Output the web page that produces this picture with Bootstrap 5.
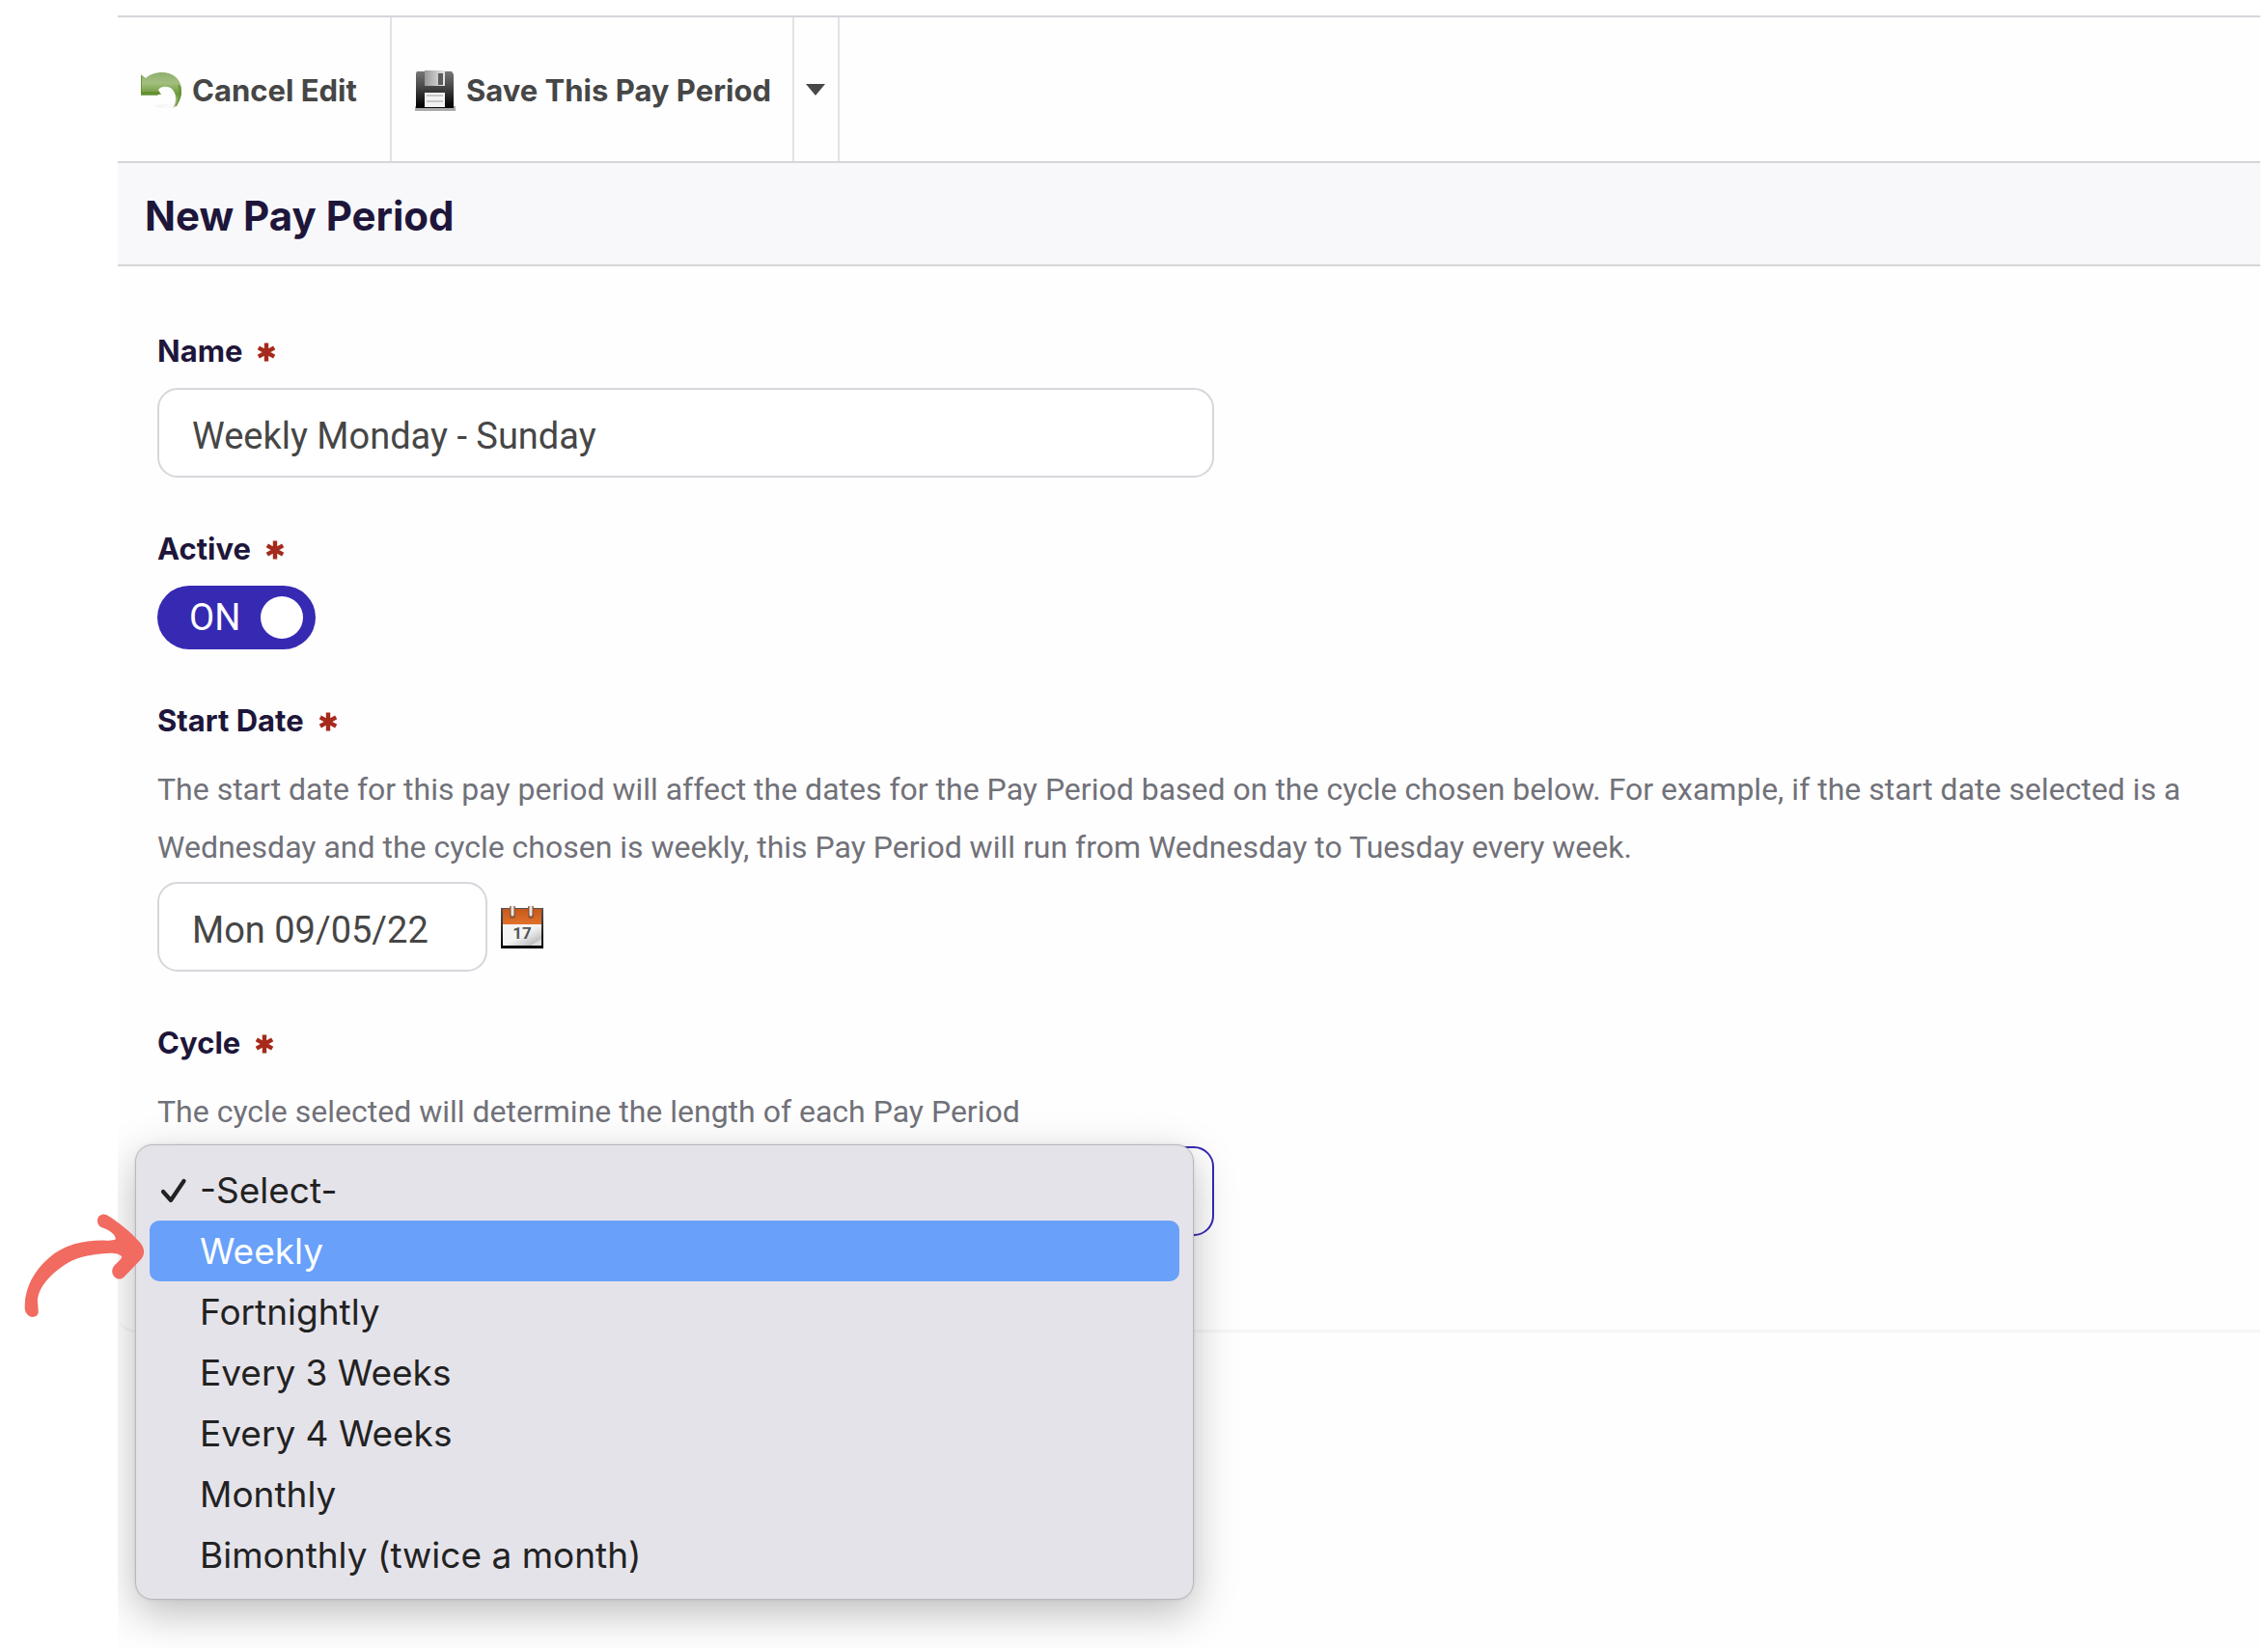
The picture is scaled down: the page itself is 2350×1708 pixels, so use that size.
<!DOCTYPE html>
<html lang="en">
<head>
<meta charset="utf-8">
<meta name="viewport" content="width=device-width, initial-scale=1">
<title>New Pay Period</title>
<link href="https://cdn.jsdelivr.net/npm/bootstrap@5.3.0/dist/css/bootstrap.min.css" rel="stylesheet">
<style>
  body { font-family: Roboto, "Liberation Sans", sans-serif; background: #fff; color: #464646; }
  .page { padding: 16px 8px 0 122px; overflow: hidden; }
  .panel { overflow: hidden; background: #fefefe; }
  .toolbar { height: 151px; border-top: 2px solid #d6d6dc; }
  .tool { gap: 11px; padding: 2px 22px 0 24px; border: 0; border-right: 2px solid #e2e2e4; background: transparent;
          font: 700 31px Inter, sans-serif; color: #464646; }
  .tool-cancel { min-width: 284px; }
  .tool-more { padding: 0 13px 0 12px; }
  .tool svg { display: block; flex: none; }
  .band { height: 109px; padding: 4px 28px 0; background: #f8f8fb; border-top: 2px solid #d6d6da; border-bottom: 2px solid #d6d6da; }
  .band h1 { font: 700 42px/60px Inter, sans-serif; color: #1e163a; }
  .form-area { padding: 65px 41px 97px; border-bottom: 3px solid #f6f6f6; border-bottom-left-radius: 18px; }
  .field { margin-bottom: 51px; }
  .field:last-child { margin-bottom: 0; }
  .field-label { display: flex; align-items: center; gap: 15px; width: fit-content; margin-bottom: 15px;
                 font: 700 31px/46px Inter, sans-serif; color: #1e163a; }
  .field-label:has(+ .help) { margin-bottom: 0; }
  .req { width: 20px; height: 22px; padding-top: 2px; }
  .help { margin: 18px 0 6px; font-size: 32px; line-height: 60px; color: #717179; }
  .box { width: 100%; max-width: 1095px; height: 93px; padding: 6px 34px 0; border: 2px solid #d6d6dc; border-radius: 21px;
         font-size: 38px; line-height: 48px; color: #464646; background-color: #fff; }
  .box-date { width: 342px; }
  .box-cycle { appearance: none; border-color: #3629b2; }
  .cal-btn { margin-left: 14px; padding: 0; border: 0; background: transparent; }
  .cal-btn svg { display: block; }
  .switch { position: relative; display: flex; align-items: center; width: 164px; height: 66px; padding-left: 33px;
            border-radius: 33px; background: #3629b2; font-size: 38px; line-height: 66px; color: #fff; }
  .switch input { position: absolute; inset: 0; width: 100%; height: 100%; margin: 0; opacity: 0; }
  .knob { width: 44px; height: 44px; margin-left: auto; margin-right: 13px; border-radius: 50%; background: #fff; }
  .choices { position: absolute; z-index: 5; top: -2px; left: -23px; width: 1097px; margin: 0; padding: 15px 14px 14px; list-style: none;
          background: #e5e3ea; border: 1px solid #b9b8bd; border-radius: 18px;
          box-shadow: 0 14px 44px rgba(0,0,0,.26), 0 0 3px rgba(0,0,0,.12); }
  .choice { display: flex; align-items: center; width: 100%; height: 63px; padding: 0 8px; border: 0; border-radius: 10px;
            background: transparent; font: 400 37px/63px Inter, sans-serif; color: #222; text-align: left; }
  .choice.picked { background: #68a0fa; color: #fff; }
  .tick { flex: none; width: 44px; height: 34px; }
  /* Sits in the cycle row but is free of the panel's clipping */
  .pointer { position: absolute; z-index: 6; margin: 57px 0 0 -143px; }
</style>
<script src="https://cdn.jsdelivr.net/npm/bootstrap@5.3.0/dist/js/bootstrap.bundle.min.js"></script>
</head>
<body>
<svg width="0" height="0" class="position-absolute" aria-hidden="true">
  <symbol id="star" viewBox="0 0 20 20"><path d="M10 .5V19.500M1.800 5.300L18.200 14.700M18.200 5.300L1.800 14.700" stroke="#a52a1b" stroke-width="4.400" fill="none"/></symbol>
</svg>
<div class="page min-vh-100 d-flex flex-column">
  <main class="panel flex-grow-1">
    <div class="toolbar d-flex">
      <button type="button" class="tool tool-cancel d-flex align-items-center">
        <svg width="42" height="38" viewBox="0 0 42 38">
          <defs><linearGradient id="leaf" x1="0" y1="0" x2="0" y2="1"><stop offset="0" stop-color="#8fae70"/><stop offset=".3" stop-color="#a3bf7e"/><stop offset=".6" stop-color="#6f9a3c"/><stop offset="1" stop-color="#c4d3b2"/></linearGradient></defs>
          <ellipse cx="26" cy="35" rx="12" ry="2" fill="#f6f7f5"/>
          <path d="M0 2L5 6C13-1 27-2 35 4C43 10 44 21 40 29C38 33 36 36 33 37C37 30 37 22 32 17C28 14 21 14 18 18L21 23L0 23Z" fill="url(#leaf)"/>
          <path d="M30 16C38 21 38 30 33 37C28 38 24 37 20 36C30 36 35 26 30 16Z" fill="#fdfdfd" opacity=".5"/>
          <path d="M1 21H18L17 23H0V4" fill="none" stroke="#5f8d2c" stroke-width="1.500"/>
          <path d="M39 13C42 20 41 27 36 35" fill="none" stroke="#5f8d2c" stroke-width="2" opacity=".7"/>
        </svg>
        <span>Cancel Edit</span>
      </button>
      <button type="button" class="tool d-flex align-items-center">
        <svg width="42" height="42" viewBox="0 0 42 42">
          <defs>
            <linearGradient id="shell" x1="0" y1="0" x2="0" y2="1"><stop offset="0" stop-color="#777"/><stop offset=".45" stop-color="#444"/><stop offset=".9" stop-color="#080808"/></linearGradient>
            <linearGradient id="shutter" x1="0" y1="0" x2="1" y2="0"><stop offset="0" stop-color="#999"/><stop offset="1" stop-color="#e8e8e8"/></linearGradient>
          </defs>
          <rect x="0" y="37" width="42" height="5" fill="#aaa"/>
          <path d="M2 1H38L40 4V39H1V3Z" fill="url(#shell)"/>
          <rect x="10" y="0" width="21" height="16" fill="url(#shutter)"/>
          <rect x="24" y="3" width="5" height="12" fill="#5c5c5c"/>
          <rect x="10" y="23" width="21" height="15" fill="#f3f3f3"/>
          <path d="M12 26H29M12 32H29" stroke="#bbb" stroke-width="1.500"/>
        </svg>
        <span>Save This Pay Period</span>
      </button>
      <button type="button" class="tool tool-more d-flex align-items-center" aria-label="More save options">
        <svg width="20" height="12" viewBox="0 0 20 12"><path d="M0 0H20L10 12Z" fill="#484848"/></svg>
      </button>
    </div>
    <header class="band d-flex align-items-center"><h1 class="m-0">New Pay Period</h1></header>

    <form class="form-area">
      <div class="field">
        <label class="field-label" for="name">Name <svg class="req"><use href="#star"/></svg></label>
        <input id="name" type="text" class="box d-block" value="Weekly Monday - Sunday">
      </div>
      <div class="field">
        <label class="field-label" for="active">Active <svg class="req"><use href="#star"/></svg></label>
        <div class="switch"><span>ON</span><span class="knob"></span><input id="active" type="checkbox" role="switch" checked></div>
      </div>
      <div class="field">
        <label class="field-label" for="start">Start Date <svg class="req"><use href="#star"/></svg></label>
        <p class="help">The start date for this pay period will affect the dates for the Pay Period based on the cycle chosen below. For example, if the start date selected is a Wednesday and the cycle chosen is weekly, this Pay Period will run from Wednesday to Tuesday every week.</p>
        <div class="d-flex align-items-center">
          <input id="start" type="text" class="box box-date" value="Mon 09/05/22">
          <button type="button" class="cal-btn" aria-label="Choose a date">
            <svg width="44" height="44" viewBox="0 0 44 44">
              <defs>
                <linearGradient id="head" x1="0" y1="0" x2="0" y2="1"><stop offset="0" stop-color="#c65a1c"/><stop offset="1" stop-color="#e2702a"/></linearGradient>
                <linearGradient id="edge" x1="0" y1="0" x2="0" y2="1"><stop offset="0" stop-color="#555"/><stop offset="1" stop-color="#000"/></linearGradient>
                <linearGradient id="sheet" x1="0" y1="0" x2="1" y2="1"><stop offset=".5" stop-color="#f4f4f4"/><stop offset="1" stop-color="#a8a8a8"/></linearGradient>
              </defs>
              <rect x="0" y="2" width="44" height="42" fill="url(#edge)"/>
              <rect x="2" y="3" width="40" height="16" fill="url(#head)"/>
              <path d="M2 19H42V41H2Z" fill="url(#sheet)"/>
              <path d="M42 34L31 41H42Z" fill="#ddd"/>
              <path d="M12 2V10M31 2V10" stroke="#8a5638" stroke-width="6" stroke-linecap="round"/>
              <path d="M12 1V9M31 1V9" stroke="#ece4dd" stroke-width="3" stroke-linecap="round"/>
              <text x="22" y="34" text-anchor="middle" font-family="Roboto, sans-serif" font-weight="700" font-size="17" fill="#555">17</text>
            </svg>
          </button>
        </div>
      </div>
      <div class="field">
        <label class="field-label" for="cycle">Cycle <svg class="req"><use href="#star"/></svg></label>
        <p class="help">The cycle selected will determine the length of each Pay Period</p>
        <svg class="pointer" width="160" height="130" viewBox="0 0 480 390" aria-hidden="true">
          <path fill="#f16b60" d="M17 330C16 270 46 215 92 176C140 134 205 120 270 122C282 123 292 122 300 118C297 101 281 90 257 82C246 77 242 68 243 58C245 44 259 37 272 43C309 65 345 95 374 127C391 145 391 166 378 181L327 234C317 244 306 244 297 236C288 228 286 215 292 205C299 193 315 186 319 172C309 160 283 159 262 163C218 166 172 174 131 205C96 230 62 265 57 303C56 315 60 335 59 345C57 360 39 364 28 355C20 348 17 340 17 330Z"/>
        </svg>
        <div class="position-relative">
          <select id="cycle" class="box box-cycle d-block">
            <option>-Select-</option><option>Weekly</option><option>Fortnightly</option><option>Every 3 Weeks</option><option>Every 4 Weeks</option><option>Monthly</option><option>Bimonthly (twice a month)</option>
          </select>
          <ul class="choices" aria-label="Cycle">
            <li><button type="button" class="choice"><span class="tick d-flex align-items-center"><svg width="26" height="26" viewBox="0 0 26 26" class="ms-1"><path d="M2 14L10 23L23.500 3" fill="none" stroke="#222" stroke-width="4.200" stroke-linecap="round" stroke-linejoin="round"/></svg></span>-Select-</button></li>
            <li><button type="button" class="choice picked"><span class="tick"></span>Weekly</button></li>
            <li><button type="button" class="choice"><span class="tick"></span>Fortnightly</button></li>
            <li><button type="button" class="choice"><span class="tick"></span>Every 3 Weeks</button></li>
            <li><button type="button" class="choice"><span class="tick"></span>Every 4 Weeks</button></li>
            <li><button type="button" class="choice"><span class="tick"></span>Monthly</button></li>
            <li><button type="button" class="choice"><span class="tick"></span>Bimonthly (twice a month)</button></li>
          </ul>
        </div>
      </div>
    </form>
  </main>
</div>
</body>
</html>
